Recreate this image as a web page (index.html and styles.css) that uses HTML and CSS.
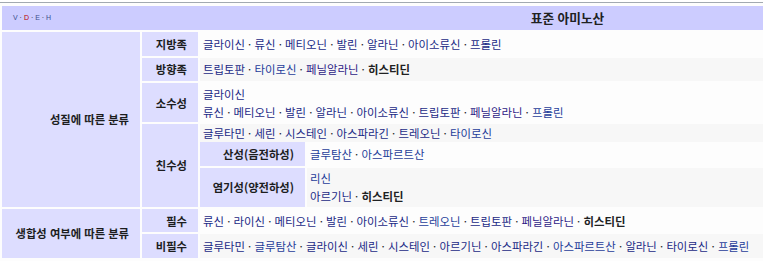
FILE: index.html
```html
<!DOCTYPE html>
<html lang="ko">
<head>
<meta charset="utf-8">
<title>표준 아미노산</title>
<link rel="stylesheet" href="styles.css">
</head>
<body>
<div class="navbox">
  <table class="nb">
    <tr>
      <th class="title" colspan="2">
        <div class="title-inner">
          <span class="navbar"><a href="#" class="nv">V</a> · <a href="#" class="nv red">D</a> · <a href="#" class="nv">E</a> · <a href="#" class="nv">H</a></span>
          <span class="title-text">표준 아미노산</span>
        </div>
      </th>
    </tr>
    <tr>
      <th class="group g1">성질에 따른 분류</th>
      <td class="list sub">
        <table class="nb">
          <tr>
            <th class="group g2">지방족</th>
            <td class="list odd"><div class="items"><a href="#">글라이신</a> · <a href="#">류신</a> · <a href="#">메티오닌</a> · <a href="#">발린</a> · <a href="#">알라닌</a> · <a href="#">아이소류신</a> · <a href="#">프롤린</a></div></td>
          </tr>
          <tr>
            <th class="group g2">방향족</th>
            <td class="list even"><div class="items"><a href="#">트립토판</a> · <a href="#" class="u">타이로신</a> · <a href="#" class="v">페닐알라닌</a> · <strong class="self">히스티딘</strong></div></td>
          </tr>
          <tr>
            <th class="group g2">소수성</th>
            <td class="list odd"><div class="items"><a href="#">글라이신</a><br><a href="#">류신</a> · <a href="#">메티오닌</a> · <a href="#">발린</a> · <a href="#">알라닌</a> · <a href="#">아이소류신</a> · <a href="#">트립토판</a> · <a href="#" class="v">페닐알라닌</a> · <a href="#" class="u">프롤린</a></div></td>
          </tr>
          <tr>
            <th class="group g2">친수성</th>
            <td class="list even sub">
              <div class="lead"><a href="#">글루타민</a> · <a href="#">세린</a> · <a href="#">시스테인</a> · <a href="#">아스파라긴</a> · <a href="#">트레오닌</a> · <a href="#" class="u">타이로신</a></div>
              <table class="nb">
                <tr>
                  <th class="group g3">산성(음전하성)</th>
                  <td class="list odd"><div class="items"><a href="#" class="u">글루탐산</a> · <a href="#" class="u">아스파르트산</a></div></td>
                </tr>
                <tr>
                  <th class="group g3">염기성(양전하성)</th>
                  <td class="list even"><div class="items"><a href="#" class="u">리신</a><br><a href="#">아르기닌</a> · <strong class="self">히스티딘</strong></div></td>
                </tr>
              </table>
            </td>
          </tr>
        </table>
      </td>
    </tr>
    <tr>
      <th class="group g1">생합성 여부에 따른 분류</th>
      <td class="list sub">
        <table class="nb">
          <tr>
            <th class="group g2">필수</th>
            <td class="list odd"><div class="items"><a href="#">류신</a> · <a href="#">라이신</a> · <a href="#">메티오닌</a> · <a href="#">발린</a> · <a href="#">아이소류신</a> · <a href="#" class="u">트레오닌</a> · <a href="#">트립토판</a> · <a href="#" class="v">페닐알라닌</a> · <strong class="self">히스티딘</strong></div></td>
          </tr>
          <tr>
            <th class="group g2">비필수</th>
            <td class="list even"><div class="items"><a href="#">글루타민</a> · <a href="#" class="u">글루탐산</a> · <a href="#">글라이신</a> · <a href="#">세린</a> · <a href="#">시스테인</a> · <a href="#">아르기닌</a> · <a href="#">아스파라긴</a> · <a href="#" class="u">아스파르트산</a> · <a href="#">알라닌</a> · <a href="#">타이로신</a> · <a href="#" class="u">프롤린</a></div></td>
          </tr>
        </table>
      </td>
    </tr>
  </table>
</div>
</body>
</html>
```
FILE: styles.css
```css
html {
  overflow: hidden;
}
body {
  margin: 0;
  background: #ffffff;
  font-family: "Noto Sans CJK KR", "Noto Sans", sans-serif;
}
.navbox {
  margin: 2px 0 0 -2px;
  border: 1px solid #a2a9b1;
  padding: 3px;
  width: 1131px;
  background: #fdfdfd;
  font-size: 11.4px;
  color: #202122;
}
.nb {
  border-collapse: separate;
  border-spacing: 0;
  width: 100%;
}
.nb tr + tr > th,
.nb tr + tr > td {
  border-top: 2px solid #fdfdfd;
}
.nb .title {
  background: #ccccff;
  padding: 3px 11px;
  line-height: 18px;
}
.title-inner {
  display: grid;
  grid-template-columns: 1fr auto 1fr;
  align-items: center;
}
.navbar {
  justify-self: start;
  font-family: "Liberation Sans", Arial, sans-serif;
  font-size: 7px;
  font-weight: normal;
  color: #202122;
  line-height: 10px;
}
.nv {
  color: #3d4f8c;
  text-decoration: none;
}
.nv.red {
  color: #ba0000;
}
.title-text {
  font-size: 12.7px;
  font-weight: bold;
}
.nb .group {
  box-sizing: border-box;
  background: #ddddff;
  text-align: right;
  padding: 2.8px 11px 2.8px 4px;
  line-height: 18px;
  font-size: 11.3px;
  font-weight: bold;
  white-space: nowrap;
  color: #1c1d1e;
}
.nb .g1 {
  width: 138px;
}
.nb .g2 {
  width: 56px;
}
.nb .g3 {
  width: 105px;
}
.nb .list {
  border-left: 2px solid #fdfdfd;
  text-align: left;
  padding: 0;
}
.odd {
  background: #fdfdfd;
}
.even {
  background: #f7f7f7;
}
.items {
  padding: 1.5px 3px;
  line-height: 18px;
}
.lead {
  padding: 0 3px;
  line-height: 18px;
}
a {
  color: #1b2a86;
  text-decoration: none;
}
a.u {
  color: #1f3d9a;
}
a.v {
  color: #2e1b86;
}
.self {
  color: #202122;
  font-weight: bold;
}
```
